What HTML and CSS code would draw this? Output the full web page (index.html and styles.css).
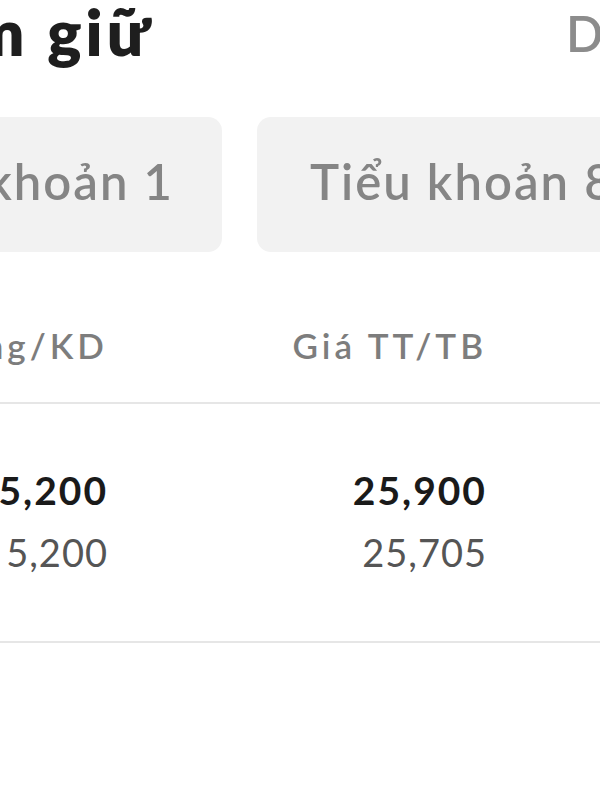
FILE: index.html
```html
<!DOCTYPE html>
<html lang="vi">
<head>
    <meta charset="UTF-8">
    <meta name="viewport" content="width=device-width, initial-scale=1.0">
    <title>Danh mục nắm giữ</title>
    <link rel="stylesheet" href="styles.css">
</head>
<body>

    <div class="page">

        <!-- Header -->
        <div class="header">
            <div class="title-wrap">
                <h1 class="title">Danh mục nắm giữ</h1>
            </div>
            <a class="header-link" href="#">Danh sách</a>
        </div>

        <!-- Sub accounts -->
        <div class="tabs">
            <div class="tab">Tiểu khoản 1</div>
            <div class="tab tab-next">Tiểu khoản 8</div>
        </div>

        <!-- Holdings table -->
        <div class="table">
            <div class="row row-head">
                <div class="cell">Tổng/KD</div>
                <div class="cell">Giá TT/TB</div>
                <div class="cell">Lãi/Lỗ</div>
            </div>
            <div class="row row-body">
                <div class="cell">
                    <div class="main">5,200</div>
                    <div class="sub">5,200</div>
                </div>
                <div class="cell">
                    <div class="main">25,900</div>
                    <div class="sub">25,705</div>
                </div>
                <div class="cell">
                    <div class="main">+1,014</div>
                    <div class="sub">+0.76%</div>
                </div>
            </div>
        </div>

    </div>

</body>
</html>
```

FILE: styles.css
```css
body {
    margin: 0;
    padding: 0;
    background: #fff;
    font-family: Lato, "Noto Sans", sans-serif;
    overflow: hidden;
    height: 800px;
}

/* the view is panned: content starts off the left edge */
.page {
    width: 1100px;
    margin-left: -200px;
}

/* Header */
.header {
    display: grid;
    grid-template-columns: 354px 1fr;
    height: 63px;
}

.title-wrap {
    display: flex;
    justify-content: flex-end;
}

.title {
    margin: 0;
    font-size: 64px;
    line-height: 1;
    font-weight: 800;
    color: #1e1e1e;
    white-space: nowrap;
    letter-spacing: 4px;
}

.header-link {
    margin-left: 412px;
    padding-top: 9px;
    font-size: 49px;
    line-height: 1;
    color: #8c8c8c;
    text-decoration: none;
    white-space: nowrap;
    font-weight: 600;
}

/* Tabs */
.tabs {
    display: grid;
    grid-template-columns: 422px 1fr;
    column-gap: 35px;
    margin-top: 54px;
}

.tab {
    height: 135px;
    box-sizing: border-box;
    padding: 0 48px 7px;
    display: flex;
    align-items: center;
    justify-content: flex-end;
    background: #f2f2f2;
    border-radius: 14px;
    font-size: 49px;
    line-height: 1;
    font-weight: 600;
    color: #858585;
    letter-spacing: 2px;
    white-space: nowrap;
}

.tab-next {
    justify-content: flex-start;
    padding-left: 53px;
}

/* Table */
.row {
    display: grid;
    grid-template-columns: 308px 379px 1fr;
    border-bottom: 2px solid #e6e6e6;
}

.cell {
    text-align: right;
    white-space: nowrap;
}

.row-head {
    padding: 76px 0 39px;
    font-size: 35px;
    line-height: 1;
    color: #7d7d7d;
    font-weight: 600;
    letter-spacing: 4px;
}

.row-body {
    padding: 67px 0 70px;
}

.main {
    font-size: 39px;
    line-height: 1;
    font-weight: 700;
    color: #1a1a1a;
    letter-spacing: 2px;
}

.sub {
    margin-top: 23px;
    font-size: 38px;
    line-height: 1;
    color: #555;
    letter-spacing: 1px;
}
```
